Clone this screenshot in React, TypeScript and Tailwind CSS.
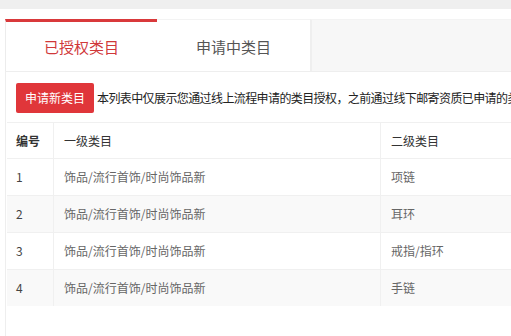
import React from "react";

const ROWS = [
  { no: "1", first: "饰品/流行首饰/时尚饰品新", second: "项链" },
  { no: "2", first: "饰品/流行首饰/时尚饰品新", second: "耳环" },
  { no: "3", first: "饰品/流行首饰/时尚饰品新", second: "戒指/指环" },
  { no: "4", first: "饰品/流行首饰/时尚饰品新", second: "手链" },
];

const font = { fontFamily: '"Microsoft YaHei", "Noto Sans CJK SC", "Noto Sans", sans-serif' };

export default function App() {
  return (
    <div className="w-[511px] h-[336px] overflow-hidden bg-white" style={font}>
      <div className="h-[9px] bg-[#efefef]" />
      <div className="pt-[10px] pl-[5px] w-[900px]">
        {/* tabs */}
        <div className="flex h-[52px]">
          <div className="w-[152px] flex items-center justify-center border-t-[3px] border-[#d9393b] border-l border-l-[#ececec] bg-white text-[15px] text-[#d0383a] pt-[1px]">
            已授权类目
          </div>
          <div className="w-[153px] flex items-center justify-center border-t border-[#f3f3f3] bg-white text-[15px] text-[#555] pt-[3px]">
            申请中类目
          </div>
          <div className="flex-1 bg-[#f7f7f7] border-l-[2px] border-[#efefef] border-t border-t-[#f3f3f3]" />
        </div>

        {/* content */}
        <div className="border-l border-t border-[#eeeeee] pl-[10px] pt-[11px] pb-10">
          <div className="flex items-center gap-[3px]">
            <button className="h-[30px] w-[78px] rounded-[2px] bg-[#e0363a] text-white text-[12px]">
              申请新类目
            </button>
            <span className="text-[12px] tracking-[-0.6px] text-[#222] whitespace-nowrap">
              本列表中仅展示您通过线上流程申请的类目授权，之前通过线下邮寄资质已申请的类目不在此展示
            </span>
          </div>

          <div className="mt-[9px] -ml-[9px] text-[12px]">
            <div className="grid grid-cols-[47px_327px_1fr] h-[36px] border-t border-[#f0f0f0] bg-white font-bold text-[#333]">
              <div className="flex items-center pl-[9px] border-r border-[#f0f0f0]">编号</div>
              <div className="flex items-center pl-[10px] border-r border-[#f0f0f0] font-normal text-[#333]">一级类目</div>
              <div className="flex items-center pl-[10px] font-normal text-[#333]">二级类目</div>
            </div>
            {ROWS.map((r, i) => (
              <div
                key={r.no}
                className={`grid grid-cols-[47px_327px_1fr] h-[37px] border-t border-[#f0f0f0] text-[#666] ${
                  i % 2 === 1 ? "bg-[#f9f9f9]" : "bg-white"
                }`}
              >
                <div className="flex items-center pl-[9px] border-r border-[#f0f0f0] text-[#444]">{r.no}</div>
                <div className="flex items-center pl-[10px] border-r border-[#f0f0f0]">{r.first}</div>
                <div className="flex items-center pl-[10px]">{r.second}</div>
              </div>
            ))}
          </div>
        </div>
      </div>
    </div>
  );
}
